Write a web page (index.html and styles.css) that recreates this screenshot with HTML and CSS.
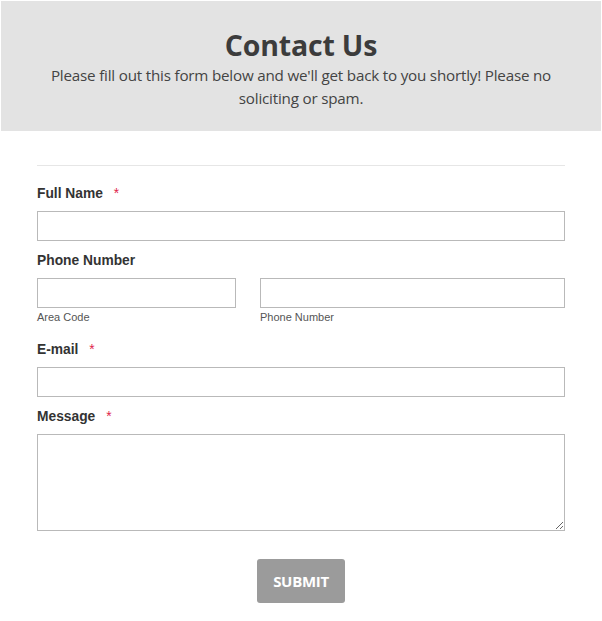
FILE: index.html
```html
<!DOCTYPE html>
<html>
<head>
<meta charset="utf-8">
<link rel="stylesheet" href="styles.css">
</head>
<body>
<div class="page">
  <header class="hero">
    <h1 class="title">Contact Us</h1>
    <p class="lead">Please fill out this form below and we'll get back to you shortly! Please no soliciting or spam.</p>
  </header>
  <form class="form">
    <hr class="divider">
    <div class="field">
      <label class="label">Full Name <span class="req">*</span></label>
      <input class="input" type="text">
    </div>
    <div class="field">
      <label class="label">Phone Number</label>
      <div class="phone-row">
        <div class="sub area">
          <input class="input" type="text">
          <span class="sublabel">Area Code</span>
        </div>
        <div class="sub num">
          <input class="input" type="text">
          <span class="sublabel">Phone Number</span>
        </div>
      </div>
    </div>
    <div class="field">
      <label class="label">E-mail <span class="req">*</span></label>
      <input class="input" type="text">
    </div>
    <div class="field">
      <label class="label">Message <span class="req">*</span></label>
      <textarea class="textarea"></textarea>
    </div>
    <div class="actions">
      <button class="submit" type="button">SUBMIT</button>
    </div>
  </form>
</div>
</body>
</html>
```
FILE: styles.css
```css
* { box-sizing: border-box; }
html, body { margin: 0; padding: 0; background: #fff; }
body { padding: 1px; font-family: "Liberation Sans", Arial, sans-serif; }
.page { width: 600px; }
.hero {
  background: #e3e3e3;
  height: 130px;
  padding-top: 27px;
  text-align: center;
  color: #444;
}
.title {
  margin: 0;
  font-family: "Open Sans", sans-serif;
  font-weight: 700;
  font-size: 28.5px;
  line-height: 34px;
  color: #3c3c3c;
  letter-spacing: -0.2px;
}
.lead {
  margin: 2px auto 0;
  width: 540px;
  font-family: "Open Sans", sans-serif;
  font-size: 15.2px;
  line-height: 23px;
  color: #444;
  letter-spacing: -0.2px;
}
.form {
  padding: 0 36px;
  margin: 0;
}
.divider {
  border: 0;
  border-top: 1px solid #e6e6e6;
  margin: 34px 0 0 0;
  height: 0;
}
.field { margin-top: 20px; }
.field + .field { margin-top: 12px; }
.label {
  display: block;
  font-weight: 700;
  font-size: 13.8px;
  line-height: 16px;
  color: #333;
  margin-bottom: 9px;
}
.req { color: #e0254b; font-weight: 400; margin-left: 7px; }
.input {
  display: block;
  width: 100%;
  height: 30px;
  border: 1px solid #b9b9b9;
  background: #fff;
  margin: 0;
  padding: 0 6px;
  font: inherit;
}
.phone-row {
  display: flex;
  gap: 24px;
}
.sub.area { width: 199px; }
.sub.num { flex: 1; }
.sublabel {
  display: block;
  font-size: 11px;
  line-height: 13px;
  margin-top: 3px;
  margin-bottom: 6px;
  color: #555;
}
.textarea {
  display: block;
  width: 100%;
  height: 97px;
  border: 1px solid #b9b9b9;
  margin: 0;
  padding: 6px;
  font: inherit;
  resize: vertical;
}
.actions {
  display: flex;
  justify-content: center;
  margin-top: 28px;
}
.submit {
  width: 88px;
  height: 44px;
  background: #9b9b9b;
  border: 0;
  border-radius: 3px;
  color: #fff;
  font-family: "Open Sans", sans-serif;
  font-weight: 700;
  font-size: 15px;
  letter-spacing: -0.3px;
  padding: 0;
}
```
